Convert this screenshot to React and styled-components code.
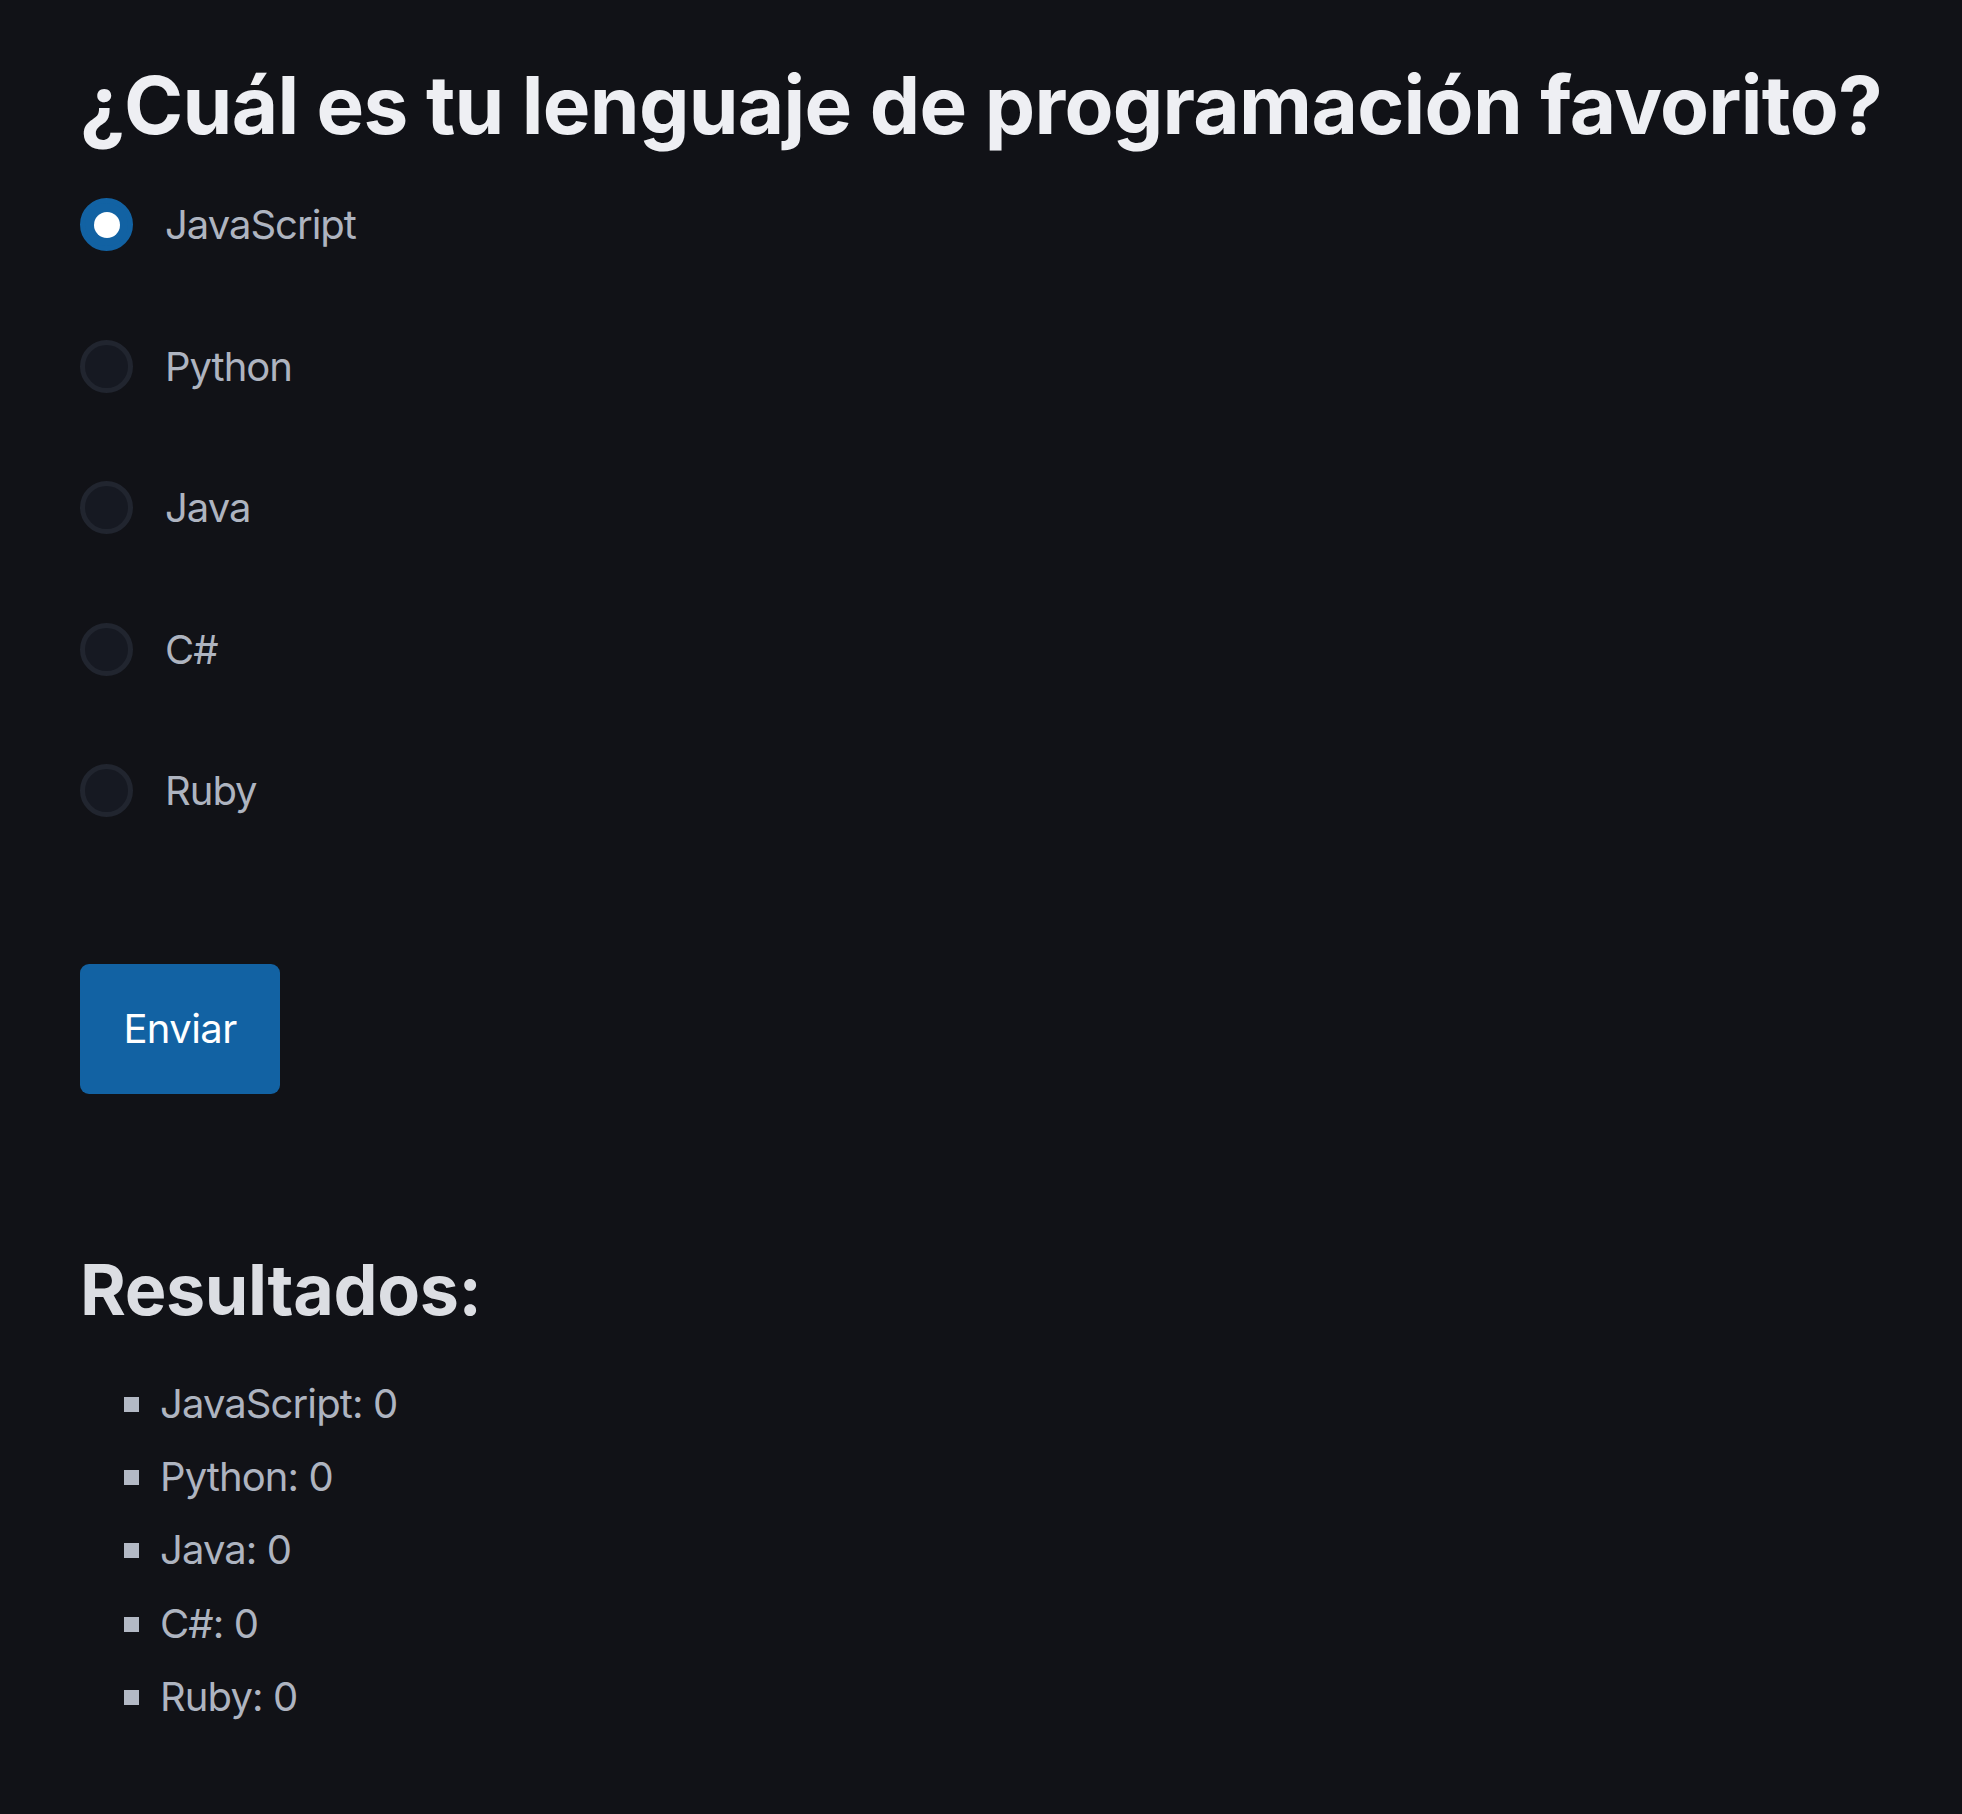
import React, { useState } from 'react';
import styled, { createGlobalStyle } from 'styled-components';

const GlobalStyle = createGlobalStyle`
  html, body {
    margin: 0;
    background: #111217;
  }
  body {
    font-family: Inter, "Noto Sans", sans-serif;
  }
`;

const Page = styled.main`
  min-height: 1814px;
  box-sizing: border-box;
  padding: 57px 80px 0;
  background: #111217;
`;

const Title = styled.h1`
  margin: 0;
  font-size: 80px;
  line-height: 96px;
  font-weight: 700;
  letter-spacing: -0.7px;
  white-space: nowrap;
  color: #eeeff3;
`;

const Options = styled.div`
  display: flex;
  flex-direction: column;
  margin-top: 1px;
`;

const OptionRow = styled.label`
  display: flex;
  align-items: center;
  gap: 32px;
  height: 141.5px;
  cursor: pointer;
`;

const Radio = styled.span`
  width: 53px;
  height: 53px;
  box-sizing: border-box;
  border-radius: 50%;
  display: flex;
  align-items: center;
  justify-content: center;
  background: ${(p) => (p.$checked ? '#1262a3' : '#161922')};
  border: 5px solid ${(p) => (p.$checked ? '#1262a3' : '#21252f')};
  &::after {
    content: '';
    width: 26px;
    height: 26px;
    border-radius: 50%;
    background: #ffffff;
    display: ${(p) => (p.$checked ? 'block' : 'none')};
  }
`;

const OptionText = styled.span`
  font-size: 40px;
  letter-spacing: -1px;
  color: #aeb4c0;
`;

const SubmitButton = styled.button`
  margin-top: 102px;
  width: 200px;
  height: 130px;
  border: none;
  border-radius: 9px;
  background: #1262a3;
  color: #ffffff;
  font-family: Inter, "Noto Sans", sans-serif;
  font-size: 40px;
  font-weight: 400;
  letter-spacing: -0.6px;
  cursor: pointer;
`;

const ResultsTitle = styled.h2`
  margin: 154px 0 0;
  font-size: 70px;
  line-height: 84px;
  font-weight: 700;
  letter-spacing: -0.4px;
  color: #dcdee3;
`;

const ResultsList = styled.ul`
  list-style: none;
  margin: 35px 0 0;
  padding: 0 0 0 44px;
`;

const ResultItem = styled.li`
  display: flex;
  align-items: center;
  height: 73.4px;
  font-size: 40px;
  letter-spacing: -0.9px;
  color: #aeb4c0;
  &::before {
    content: '';
    width: 15px;
    height: 15px;
    background: #b3b9c5;
    margin-right: 21px;
    margin-top: 2px;
  }
`;

const languages = ['JavaScript', 'Python', 'Java', 'C#', 'Ruby'];

export default function App() {
  const [selected, setSelected] = useState('JavaScript');
  const votes = { JavaScript: 0, Python: 0, Java: 0, 'C#': 0, Ruby: 0 };

  return (
    <>
      <GlobalStyle />
      <Page>
        <Title>¿Cuál es tu lenguaje de programación favorito?</Title>
        <Options>
          {languages.map((lang) => (
            <OptionRow key={lang} onClick={() => setSelected(lang)}>
              <Radio $checked={selected === lang} />
              <OptionText>{lang}</OptionText>
            </OptionRow>
          ))}
        </Options>
        <SubmitButton>Enviar</SubmitButton>
        <ResultsTitle>Resultados:</ResultsTitle>
        <ResultsList>
          {languages.map((lang) => (
            <ResultItem key={lang}>
              {lang}: {votes[lang]}
            </ResultItem>
          ))}
        </ResultsList>
      </Page>
    </>
  );
}
